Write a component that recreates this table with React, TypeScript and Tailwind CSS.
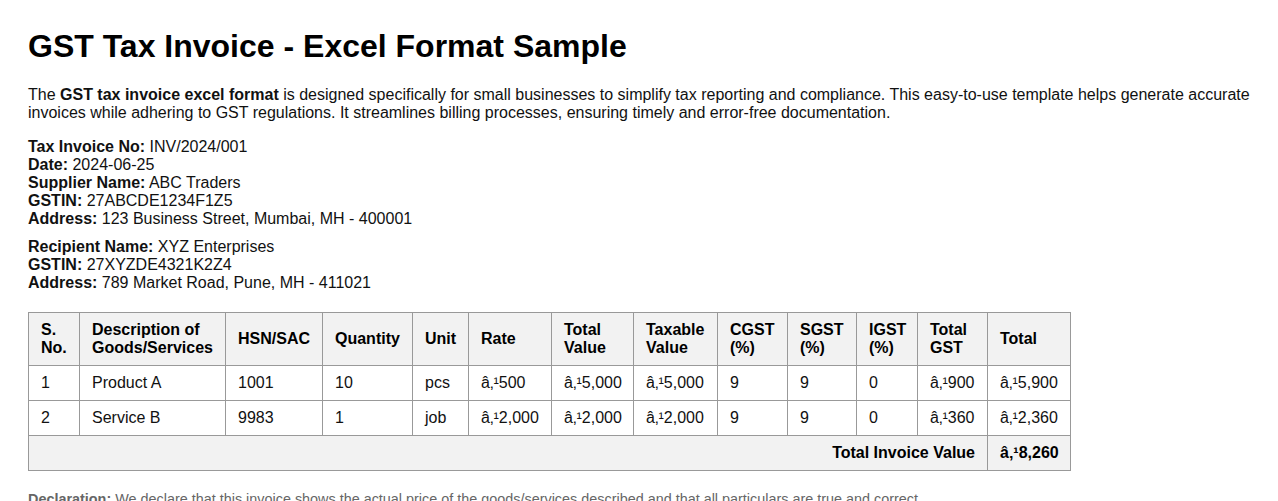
import React from 'react';

const R = 'â‚¹';

const cols = [51, 146, 97, 90, 56, 83, 82, 84, 70, 69, 61, 70, 83];

const headers: React.ReactNode[] = [
  <>S.<br />No.</>,
  <>Description of<br />Goods/Services</>,
  'HSN/SAC',
  'Quantity',
  'Unit',
  'Rate',
  <>Total<br />Value</>,
  <>Taxable<br />Value</>,
  <>CGST<br />(%)</>,
  <>SGST<br />(%)</>,
  <>IGST<br />(%)</>,
  <>Total<br />GST</>,
  'Total',
];

const rows = [
  ['1', 'Product A', '1001', '10', 'pcs', `${R}500`, `${R}5,000`, `${R}5,000`, '9', '9', '0', `${R}900`, `${R}5,900`],
  ['2', 'Service B', '9983', '1', 'job', `${R}2,000`, `${R}2,000`, `${R}2,000`, '9', '9', '0', `${R}360`, `${R}2,360`],
];

const cell = 'border border-[#999] px-3 py-2 text-left align-middle leading-[18px]';

export default function App() {
  return (
    <div className="bg-white px-7 pt-7 text-[16px] text-[#111] font-['Liberation_Sans',Arial,sans-serif]">
      {/* Title */}
      <h1 className="text-[32px] font-bold leading-[37px] text-black">GST Tax Invoice - Excel Format Sample</h1>

      <p className="mt-[21px] leading-[18px]">
        The <b>GST tax invoice excel format</b> is designed specifically for small businesses to simplify tax reporting and compliance. This easy-to-use template helps generate accurate invoices while adhering to GST regulations. It streamlines billing processes, ensuring timely and error-free documentation.
      </p>

      {/* Parties */}
      <div className="mt-4 leading-[18px]">
        <div><b>Tax Invoice No:</b> INV/2024/001</div>
        <div><b>Date:</b> 2024-06-25</div>
        <div><b>Supplier Name:</b> ABC Traders</div>
        <div><b>GSTIN:</b> 27ABCDE1234F1Z5</div>
        <div><b>Address:</b> 123 Business Street, Mumbai, MH - 400001</div>
      </div>
      <div className="mt-[10px] leading-[18px]">
        <div><b>Recipient Name:</b> XYZ Enterprises</div>
        <div><b>GSTIN:</b> 27XYZDE4321K2Z4</div>
        <div><b>Address:</b> 789 Market Road, Pune, MH - 411021</div>
      </div>

      {/* Items */}
      <table className="mt-5 border-collapse table-fixed w-[1042px]">
        <colgroup>
          {cols.map((w, i) => (
            <col key={i} style={{ width: w }} />
          ))}
        </colgroup>
        <thead>
          <tr className="bg-[#f2f2f2]">
            {headers.map((h, i) => (
              <th key={i} className={`${cell} font-bold text-black`}>{h}</th>
            ))}
          </tr>
        </thead>
        <tbody>
          {rows.map((r, i) => (
            <tr key={i}>
              {r.map((c, j) => (
                <td key={j} className={`${cell} whitespace-nowrap`}>{c}</td>
              ))}
            </tr>
          ))}
          <tr className="bg-[#f2f2f2]">
            <td colSpan={12} className={`${cell} text-right! font-bold text-black`}>Total Invoice Value</td>
            <td className={`${cell} font-bold text-black whitespace-nowrap`}>{R}8,260</td>
          </tr>
        </tbody>
      </table>

      <p className="mt-5 text-[14.4px] leading-4 text-[#666] pb-4">
        <b>Declaration:</b> We declare that this invoice shows the actual price of the goods/services described and that all particulars are true and correct.
      </p>
    </div>
  );
}
